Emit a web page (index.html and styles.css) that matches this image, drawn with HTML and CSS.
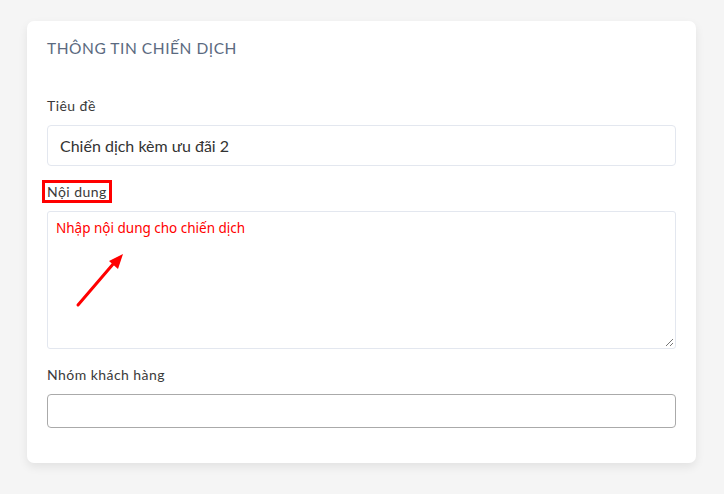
FILE: index.html
```html
<!DOCTYPE html>
<html lang="vi">
<head>
<meta charset="utf-8">
<link rel="stylesheet" href="styles.css">
</head>
<body>
<div class="card">
  <h2 class="title">THÔNG TIN CHIẾN DỊCH</h2>
  <div class="field first">
    <label class="label">Tiêu đề</label>
    <div class="input light">Chiến dịch kèm ưu đãi 2</div>
  </div>
  <div class="field">
    <label class="label"><span class="hl">Nội dung</span></label>
    <div class="textarea">
      <span class="ph">Nhập nội dung cho chiến dịch</span>
      <svg class="arrow" width="60" height="60" viewBox="0 0 60 60">
        <line x1="4" y1="55" x2="40" y2="13" stroke="#f00" stroke-width="3" stroke-linecap="round"/>
        <polygon points="49,4 35,11 44,19" fill="#f00"/>
      </svg>
      <svg class="grip" width="10" height="10" viewBox="0 0 10 10">
        <line x1="9" y1="2" x2="2" y2="9" stroke="#777" stroke-width="1"/>
        <line x1="9" y1="6" x2="6" y2="9" stroke="#777" stroke-width="1"/>
      </svg>
    </div>
  </div>
  <div class="field">
    <label class="label">Nhóm khách hàng</label>
    <div class="input dark"></div>
  </div>
</div>
</body>
</html>
```
FILE: styles.css
```css
html, body { margin: 0; padding: 0; }
body {
  background: #f5f5f5;
  font-family: "Lato", "Noto Sans", sans-serif;
  padding: 21px 28px 0 27px;
  height: 494px;
  box-sizing: border-box;
}
.card {
  background: #fff;
  border-radius: 7px;
  box-shadow: 0 4px 10px rgba(0,0,0,0.08);
  padding: 17px 20px 36px 20px;
  display: flex;
  flex-direction: column;
  height: 442px;
  box-sizing: border-box;
}
.title {
  margin: 0;
  font-weight: 400;
  font-size: 15.5px;
  line-height: 20px;
  color: #5b6a80;
  letter-spacing: 0.55px;
}
.field { display: flex; flex-direction: column; }
.field.first { margin-top: 39px; }
.label {
  font-size: 14px;
  line-height: 18px;
  color: #3a3a3a;
  margin-bottom: 10px;
  letter-spacing: 0.45px;
}
.field + .field { margin-top: 17px; }
.hl {
  display: inline-block;
  border: 3px solid #f00;
  padding: 1px 2px 1px 2px;
  margin: -4px 0 -4px -5px;
  line-height: 15px;
}
.input {
  height: 41px;
  box-sizing: border-box;
  border-radius: 4px;
  padding: 0 12px;
  display: flex;
  align-items: center;
  font-size: 16px;
  color: #333;
}
.input.light { border: 1px solid #e3e7ef; }
.input.dark { border: 1px solid #aaa; height: 34px; }
.textarea {
  position: relative;
  height: 138px;
  box-sizing: border-box;
  border: 1px solid #e3e7ef;
  border-radius: 3px;
  padding: 5px 8px;
}
.ph {
  font-family: "Noto Sans", "Open Sans", sans-serif;
  font-size: 13.5px;
  color: #f00;
  line-height: 18px;
}
.arrow { position: absolute; left: 26px; top: 38px; }
.grip { position: absolute; right: 1px; bottom: 1px; }
```
